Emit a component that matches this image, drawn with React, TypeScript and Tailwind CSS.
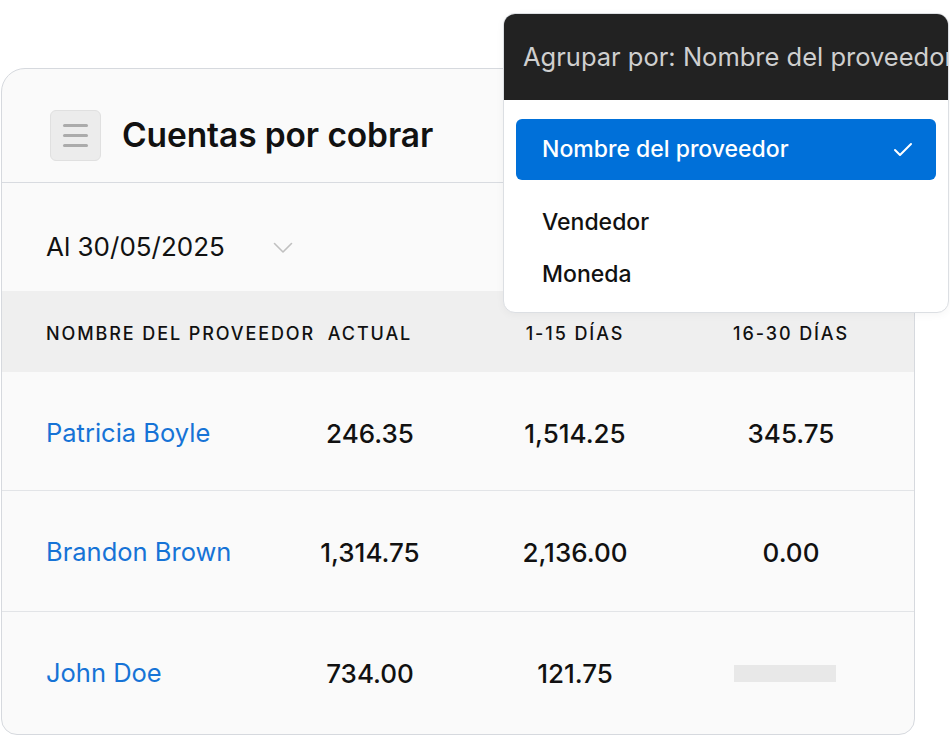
import { Check } from "lucide-react";

const rows = [
  { name: "Patricia Boyle", actual: "246.35", d15: "1,514.25", d30: "345.75", h: "h-[119px]", pt: "pt-[4px]" },
  { name: "Brandon Brown", actual: "1,314.75", d15: "2,136.00", d30: "0.00", h: "h-[121px]", pt: "pt-[2px]" },
  { name: "John Doe", actual: "734.00", d15: "121.75", d30: null, h: "h-[120px]", pt: "pt-[2px]" },
];

const cols = "grid grid-cols-[318px_100px_310px_122px_1fr] items-center";

const GroupMenu = () => {
  return (
    <div className="absolute left-[503px] top-[13px] w-[446px] h-[300px] rounded-[12px] border border-[#dcdfe3] bg-white overflow-hidden shadow-[0_2px_8px_rgba(0,0,0,0.04)]">
      <div className="h-[86px] bg-[#222222] flex items-center pl-[19px] whitespace-nowrap text-[25.5px] text-[#cfcfcf]">
        Agrupar por: Nombre del proveedor
      </div>
      <div className="px-[12px] pt-[19px]">
        <div className="h-[61px] rounded-[6px] bg-[#0070d9] flex items-center justify-between pl-[26px] pr-[21px] text-white text-[23px] font-medium">
          <span>Nombre del proveedor</span>
          <Check size={24} strokeWidth={2} />
        </div>
        <div className="mt-[16px]">
          <div className="h-[52px] flex items-center pl-[26px] text-[23px] font-medium text-[#111]">Vendedor</div>
          <div className="h-[52px] flex items-center pl-[26px] text-[23px] font-medium text-[#111]">Moneda</div>
        </div>
      </div>
    </div>
  );
};

export default function App() {
  return (
    <div className="relative w-[950px] h-[736px] bg-white overflow-hidden font-['Inter',sans-serif]">
      <div className="ml-[1px] mt-[68px] w-[914px] h-[667px] rounded-tl-[24px] rounded-tr-[24px] rounded-b-[16px] border-[1.5px] border-[#d6d9de] bg-[#fafafa] overflow-hidden">
        <div className="h-[114px] flex items-center pt-[20px] pl-[48px] gap-[21px] border-b border-[#d8dbe0]">
          <div className="w-[51px] h-[51px] rounded-[6px] bg-[#ececec] border border-[#e0e0e0] flex flex-col items-center justify-center gap-[7px]">
            <span className="block w-[25px] h-[3px] rounded-full bg-[#ababab]" />
            <span className="block w-[25px] h-[3px] rounded-full bg-[#ababab]" />
            <span className="block w-[25px] h-[3px] rounded-full bg-[#ababab]" />
          </div>
          <h1 className="text-[33.5px] font-semibold text-[#111] tracking-[-0.1px]">Cuentas por cobrar</h1>
        </div>

        <div className="h-[108px] flex items-center pt-[19px] pl-[44px]">
          <span className="text-[26px] text-[#111]">Al 30/05/2025</span>
          <svg width="20" height="12" viewBox="0 0 20 12" className="ml-[48px] mt-[2px]">
            <polyline points="1.5,1.5 10,10 18.5,1.5" fill="none" stroke="#c0c0c0" strokeWidth="1.6" strokeLinecap="round" strokeLinejoin="round" />
          </svg>
        </div>

        <div className={`${cols} h-[81px] pt-[3px] bg-[#efefef] text-[18px] font-medium tracking-[1.9px] text-[#111] whitespace-nowrap`}>
          <span className="pl-[44px]">NOMBRE DEL PROVEEDOR</span>
          <span className="text-center">ACTUAL</span>
          <span className="text-center">1-15 DÍAS</span>
          <span className="text-center">16-30 DÍAS</span>
          <span />
        </div>

        {rows.map((r, i) => (
          <div
            key={r.name}
            className={`${cols} ${r.h} ${r.pt} ${i < rows.length - 1 ? "border-b border-[#e2e4e7]" : ""}`}
          >
            <span className="pl-[44px] text-[25.5px] text-[#1673d6]">{r.name}</span>
            <span className="text-center text-[26px] font-medium text-[#111]">{r.actual}</span>
            <span className="text-center text-[26px] font-medium text-[#111]">{r.d15}</span>
            {r.d30 ? (
              <span className="text-center text-[26px] font-medium text-[#111]">{r.d30}</span>
            ) : (
              <span className="justify-self-center mr-[12px] w-[102px] h-[17px] bg-[#e8e8e8]" />
            )}
            <span />
          </div>
        ))}
      </div>

      <GroupMenu />
    </div>
  );
}
